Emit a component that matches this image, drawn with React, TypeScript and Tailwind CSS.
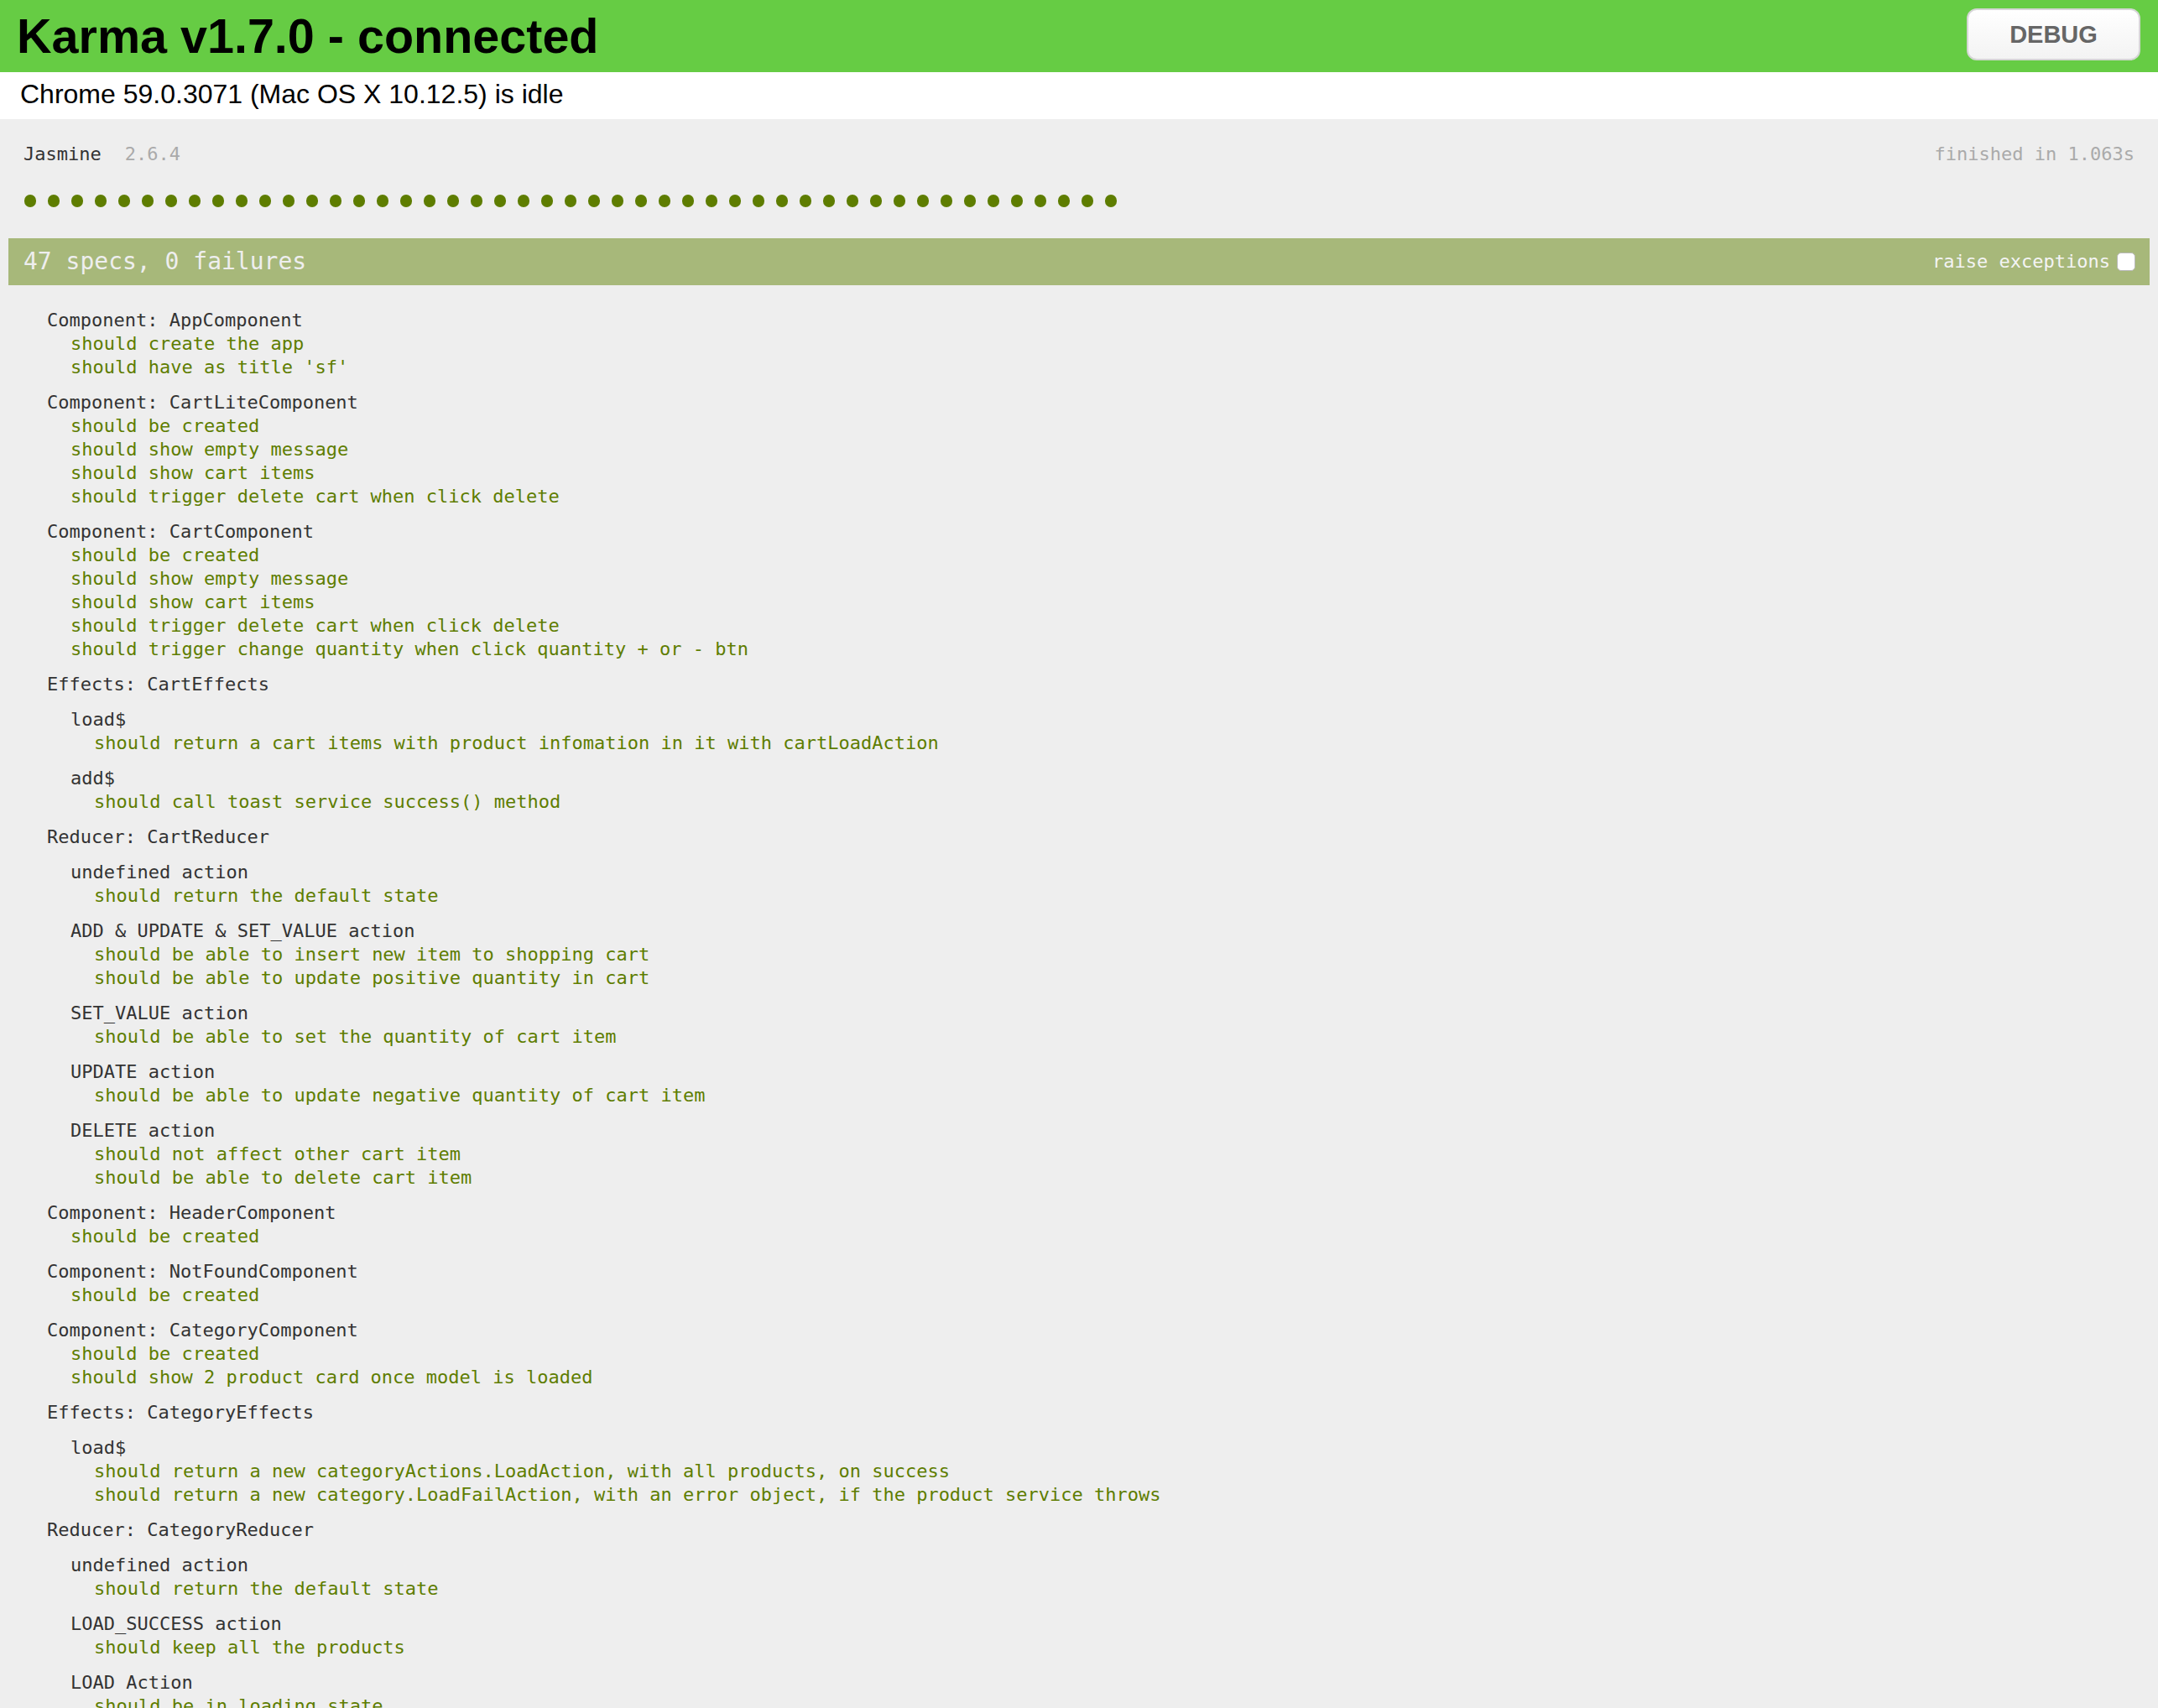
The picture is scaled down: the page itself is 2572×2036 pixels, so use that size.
import React from "react";

type Suite = { name: string; specs?: string[]; children?: Suite[] };

const suites: Suite[] = [
  { name: "Component: AppComponent", specs: ["should create the app", "should have as title 'sf'"] },
  {
    name: "Component: CartLiteComponent",
    specs: [
      "should be created",
      "should show empty message",
      "should show cart items",
      "should trigger delete cart when click delete",
    ],
  },
  {
    name: "Component: CartComponent",
    specs: [
      "should be created",
      "should show empty message",
      "should show cart items",
      "should trigger delete cart when click delete",
      "should trigger change quantity when click quantity + or - btn",
    ],
  },
  {
    name: "Effects: CartEffects",
    children: [
      { name: "load$", specs: ["should return a cart items with product infomation in it with cartLoadAction"] },
      { name: "add$", specs: ["should call toast service success() method"] },
    ],
  },
  {
    name: "Reducer: CartReducer",
    children: [
      { name: "undefined action", specs: ["should return the default state"] },
      {
        name: "ADD & UPDATE & SET_VALUE action",
        specs: [
          "should be able to insert new item to shopping cart",
          "should be able to update positive quantity in cart",
        ],
      },
      { name: "SET_VALUE action", specs: ["should be able to set the quantity of cart item"] },
      { name: "UPDATE action", specs: ["should be able to update negative quantity of cart item"] },
      { name: "DELETE action", specs: ["should not affect other cart item", "should be able to delete cart item"] },
    ],
  },
  { name: "Component: HeaderComponent", specs: ["should be created"] },
  { name: "Component: NotFoundComponent", specs: ["should be created"] },
  {
    name: "Component: CategoryComponent",
    specs: ["should be created", "should show 2 product card once model is loaded"],
  },
  {
    name: "Effects: CategoryEffects",
    children: [
      {
        name: "load$",
        specs: [
          "should return a new categoryActions.LoadAction, with all products, on success",
          "should return a new category.LoadFailAction, with an error object, if the product service throws",
        ],
      },
    ],
  },
  {
    name: "Reducer: CategoryReducer",
    children: [
      { name: "undefined action", specs: ["should return the default state"] },
      { name: "LOAD_SUCCESS action", specs: ["should keep all the products"] },
      { name: "LOAD Action", specs: ["should be in loading state"] },
    ],
  },
];

function SuiteView({ suite }: { suite: Suite }) {
  return (
    <ul className="my-[14px] ml-[28px] block">
      <li className="text-[#333333] whitespace-pre">{suite.name}</li>
      {suite.specs && (
        <ul className="ml-[28px]">
          {suite.specs.map((s, i) => (
            <li key={i} className="text-[#5e7d00] whitespace-pre">
              {s}
            </li>
          ))}
        </ul>
      )}
      {suite.children && suite.children.map((c, i) => <SuiteView key={i} suite={c} />)}
    </ul>
  );
}

export default function App() {
  const dots = Array.from({ length: 47 });
  return (
    <div className="h-[2036px] overflow-hidden bg-[#eeeeee]">
      <div className="h-[86px] bg-[#66cc44] flex items-start justify-between pl-[20px] pr-[21px] font-['Liberation_Sans',Arial,sans-serif]">
        <h1 className="text-[57.5px] leading-[66px] font-bold text-black mt-[10px] whitespace-nowrap">
          Karma v1.7.0 - connected
        </h1>
        <button className="mt-[10px] w-[207px] h-[62px] rounded-[12px] border-2 border-[#d6d6d6] bg-linear-to-b from-white to-[#f3f3f3] text-[#666666] text-[29px] font-bold leading-none flex items-center justify-center">
          DEBUG
        </button>
      </div>
      <div className="h-[56px] bg-white pl-[24px] pt-[8px] font-['Liberation_Sans',Arial,sans-serif] text-[32px] leading-[37px] text-black whitespace-nowrap">
        Chrome 59.0.3071 (Mac OS X 10.12.5) is idle
      </div>
      <div className="px-[10px] font-['DejaVu_Sans_Mono',monospace] text-[22px] leading-[28px] text-[#333333]">
        <div className="mt-[28px] h-[28px] px-[18px] flex justify-between">
          <div className="flex">
            <span>Jasmine</span>
            <span className="ml-[28px] text-[#aaaaaa]">2.6.4</span>
          </div>
          <span className="text-[#aaaaaa]">finished in 1.063s</span>
        </div>
        <div className="mt-[34px] h-[15px] px-[18px] flex">
          {dots.map((_, i) => (
            <div key={i} className="w-[28px] h-[15px] shrink-0">
              <div className="ml-[1px] w-[14px] h-[15px] rounded-full bg-[#5e7d00]" />
            </div>
          ))}
        </div>
        <div className="mt-[37px] h-[56px] bg-[#a7b87a] pl-[18px] pr-[17px] flex items-center justify-between text-[#eeeeee]">
          <span className="text-[28px] leading-[56px]">47 specs, 0 failures</span>
          <label className="flex items-center">
            <span className="text-[22px] leading-[28px] text-[#f4f4f4]">raise exceptions</span>
            <span className="ml-[8px] w-[22px] h-[22px] rounded-[5px] bg-white border border-[#b8b8b8]" />
          </label>
        </div>
        <div className="mt-[28px] pl-[18px]">
          {suites.map((s, i) => (
            <SuiteView key={i} suite={s} />
          ))}
        </div>
      </div>
    </div>
  );
}
